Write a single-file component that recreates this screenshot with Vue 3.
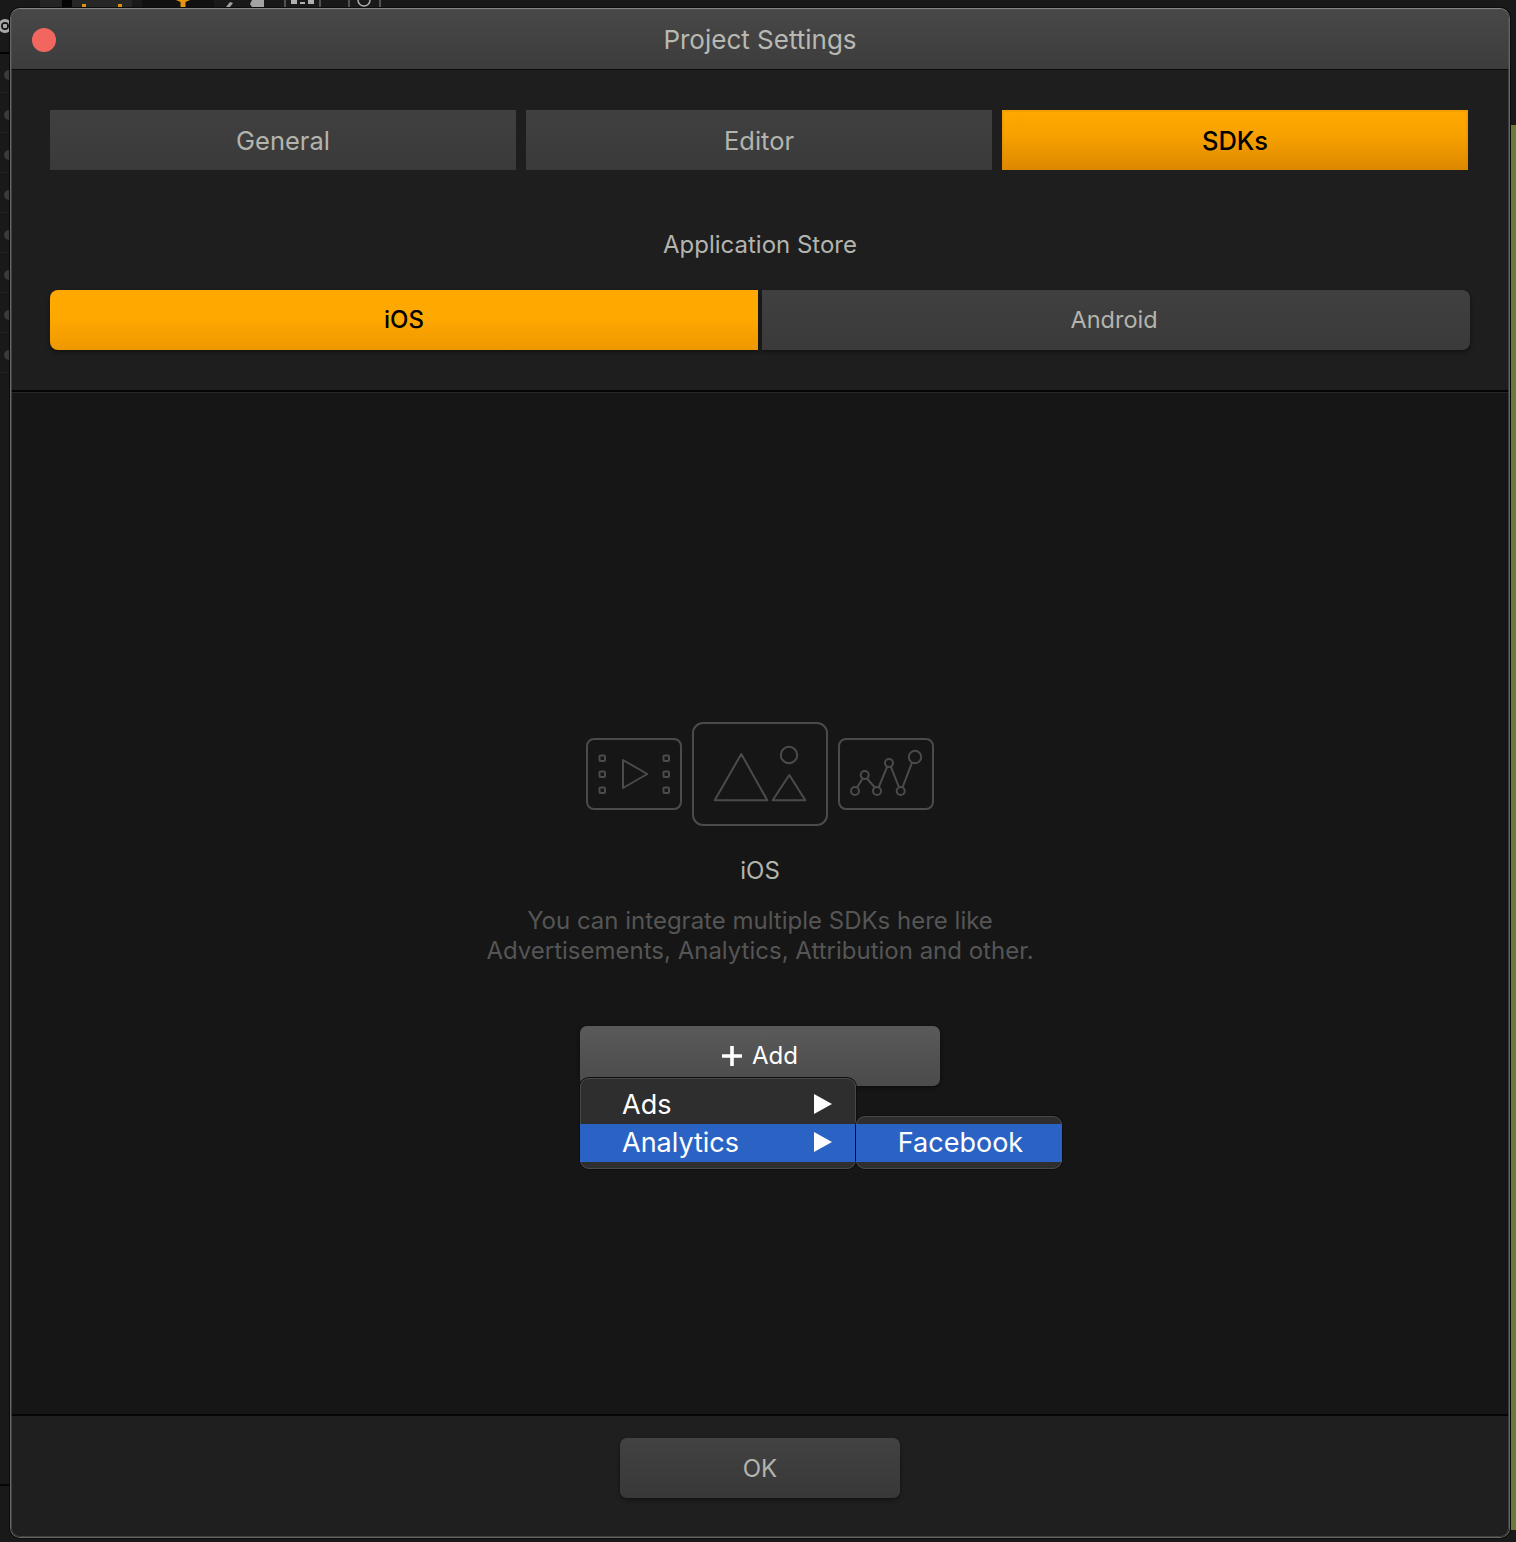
<script setup>
const tabs = [
  { label: 'General', active: false },
  { label: 'Editor', active: false },
  { label: 'SDKs', active: true },
]
const railDots = [75, 115, 155, 195, 235, 275, 315, 355]
const railLines = [92, 132, 172, 212, 252, 292, 332, 372]
</script>

<template>
  <div class="page">
    <div class="backdrop">
      <svg class="toolbar" width="400" height="8" viewBox="0 0 400 8">
        <rect x="40" width="22" height="8" fill="#242424" />
        <rect x="62" width="10" height="8" fill="#050505" />
        <rect x="72" width="60" height="8" fill="#262626" />
        <rect x="82" y="4" width="4" height="3" fill="#e0900c" />
        <rect x="118" y="4" width="4" height="3" fill="#e0900c" />
        <rect x="142" width="72" height="8" fill="#111" />
        <path d="M176 0h14l-4.500 2v5h-5V2Z" fill="#e8950d" />
        <path d="M226 7l4-5 3 1-3 4Z" fill="#a0a0a0" />
        <path d="M252 0h12v7h-12l-2-3Z" fill="#a4a4a4" />
        <path d="M285 0v7M320 0v7" stroke="#8a8a8a" />
        <path d="M291 0h6v4h-6ZM300 2h5v2h-5ZM308 0h6v4h-6Z" fill="#b0b0b0" />
        <path d="M349 0v7M380 0v7" stroke="#8a8a8a" />
        <path d="M358 0a6 6 0 0 0 12 0" fill="none" stroke="#b0b0b0" stroke-width="1.500" />
      </svg>
      <span class="rail-ring"></span>
      <span class="rail-rule"></span>
      <span v-for="y in railDots" :key="'d' + y" class="rail-dot" :style="{ top: y - 5 + 'px' }"></span>
      <span v-for="y in railLines" :key="'l' + y" class="rail-line" :style="{ top: y + 'px' }"></span>
      <span class="rail-rule low"></span>
      <span class="green-strip"></span>
    </div>

    <div class="window">
      <header class="titlebar">
        <span class="close"></span>
        <span class="title">Project Settings</span>
      </header>

      <section class="settings">
        <nav class="tabs">
          <button v-for="t in tabs" :key="t.label" class="tab" :class="{ on: t.active }">{{ t.label }}</button>
        </nav>
        <h2 class="store-label">Application Store</h2>
        <div class="segments">
          <button class="segment left on">iOS</button>
          <button class="segment right">Android</button>
        </div>
      </section>

      <main class="content">
        <svg class="hero" width="348" height="104" viewBox="0 0 348 104" fill="none" stroke="#4b4b4b" stroke-width="2" stroke-linejoin="round">
          <rect x="1" y="17" width="94" height="70" rx="7" />
          <rect x="13.5" y="33.5" width="5.5" height="5.5" rx="1" />
          <rect x="13.5" y="49.5" width="5.5" height="5.5" rx="1" />
          <rect x="13.5" y="65.5" width="5.5" height="5.5" rx="1" />
          <rect x="77.500" y="33.5" width="5.5" height="5.5" rx="1" />
          <rect x="77.500" y="49.5" width="5.5" height="5.5" rx="1" />
          <rect x="77.500" y="65.5" width="5.5" height="5.5" rx="1" />
          <path d="M37 38 61.3 52 37 66Z" />
          <rect x="107" y="1" width="134" height="102" rx="10" />
          <path d="M155.3 32 181.3 78.3H128.7Z" />
          <circle cx="203" cy="33" r="8.2" />
          <path d="M203.3 53 219.3 78.3H186.7Z" />
          <rect x="253" y="17" width="94" height="70" rx="7" />
          <path d="M271 65.5 276.7 56.5M281 56.5 288.8 65.5M292.8 65 301.2 44.7M304.8 44.7 312.9 65M316.7 65 326 40.6" />
          <circle cx="269" cy="69" r="4" />
          <circle cx="278.7" cy="53" r="4" />
          <circle cx="291" cy="69" r="4" />
          <circle cx="303" cy="41" r="4" />
          <circle cx="314.7" cy="69" r="4" />
          <circle cx="329" cy="35" r="6.2" />
        </svg>
        <p class="platform">iOS</p>
        <p class="description">You can integrate multiple SDKs here like<br />Advertisements, Analytics, Attribution and other.</p>
        <div class="add-wrap">
          <button class="add">
            <svg class="plus" width="20" height="20" viewBox="0 0 20 20"><path d="M8.2 0h3.600v8.200H20v3.600h-8.200V20H8.200v-8.200H0V8.200h8.200Z" fill="#fff" /></svg>
            <span>Add</span>
          </button>
          <div class="menu">
            <div class="menu-row">
              <span>Ads</span>
              <svg class="caret" width="18" height="20" viewBox="0 0 18 20"><path d="M0 0 18 10 0 20Z" fill="#fff" /></svg>
            </div>
            <div class="menu-row selected">
              <span>Analytics</span>
              <svg class="caret" width="18" height="20" viewBox="0 0 18 20"><path d="M0 0 18 10 0 20Z" fill="#fff" /></svg>
            </div>
            <div class="submenu">
              <div class="sub-row">Facebook</div>
            </div>
          </div>
        </div>
      </main>

      <footer class="footer">
        <button class="ok">OK</button>
      </footer>
      <span class="edge"></span>
    </div>
  </div>
</template>

<style>
html, body { margin: 0; background: #1a1a1a; }
</style>

<style scoped>
.page {
  position: relative;
  width: 1516px;
  height: 1542px;
  box-sizing: border-box;
  padding: 8px 6px 4px 10px;
  overflow: hidden;
  background: #191919;
  font-family: Inter, "Liberation Sans", sans-serif;
}
.backdrop { position: absolute; inset: 0; }
.toolbar { position: absolute; left: 0; top: 0; display: block; }
.rail-ring {
  position: absolute;
  left: -2px;
  top: 19px;
  width: 8px;
  height: 8px;
  border: 3px solid #a8a8a8;
  border-radius: 50%;
  background: radial-gradient(circle, #a8a8a8 0 2px, transparent 2.5px);
}
.rail-rule { position: absolute; left: 0; top: 52px; width: 10px; height: 2px; background: #020202; }
.rail-rule.low { top: 1484px; background: #050505; }
.rail-dot { position: absolute; left: 4px; width: 10px; height: 10px; border-radius: 50%; background: #3a3a3a; }
.rail-line { position: absolute; left: 0; width: 10px; height: 1px; background: #212121; }
.green-strip { position: absolute; left: 1511px; top: 125px; width: 5px; height: 1405px; background: #6a7a3c; }

.window {
  position: relative;
  width: 1500px;
  height: 1530px;
  box-sizing: border-box;
  display: flex;
  flex-direction: column;
  border: 1px solid #666;
  border-top-color: #858585;
  border-radius: 10px;
  background: #1e1e1e;
  box-shadow: 0 0 0 1px #0c0c0c;
  overflow: hidden;
}
.edge {
  position: absolute;
  inset: 0;
  border-radius: 9px;
  box-shadow: inset 0 0 0 1px rgba(85, 85, 85, .6);
  pointer-events: none;
}
.titlebar {
  position: relative;
  flex: none;
  display: flex;
  align-items: center;
  justify-content: center;
  padding-top: 1px;
  box-sizing: content-box;
  height: 59px;
  background: linear-gradient(#484848, #3c3c3c);
  border-bottom: 1px solid #0b0b0b;
}
.close {
  position: absolute;
  left: 21px;
  top: 19px;
  width: 24px;
  height: 24px;
  border-radius: 50%;
  background: #f1675f;
}
.title { font-size: 26px; color: #b9b9b3; }

.settings {
  flex: none;
  height: 320px;
  box-sizing: border-box;
  padding: 40px 39px 0;
  background: #1e1e1e;
}
.tabs { display: flex; gap: 10px; margin-right: 2px; }
.tab {
  flex: 1;
  height: 60px;
  border: 0;
  padding: 0;
  background: linear-gradient(#404040, #3a3a3a);
  color: #b4b4ae;
  font: 25.500px Inter, "Liberation Sans", sans-serif;
}
.tab.on {
  background: linear-gradient(#ffa800 0%, #f8a200 40%, #dc8800 100%);
  box-shadow: inset 0 0 0 2px rgba(210, 130, 0, .25);
  color: #000;
  font-weight: 500;
}
.store-label {
  margin: 60px 0 0;
  height: 30px;
  line-height: 30px;
  text-align: center;
  font-weight: 400;
  font-size: 24px;
  color: #b4b4ae;
}
.segments { display: grid; grid-template-columns: 1fr 1fr; gap: 4px; margin-top: 30px; }
.segment {
  height: 60px;
  border: 0;
  padding: 0 0 1px;
  font: 24px Inter, "Liberation Sans", sans-serif;
  background: linear-gradient(#404040, #3a3a3a);
  color: #b4b4ae;
  box-shadow: 0 2px 4px rgba(0, 0, 0, .45);
}
.segment.on {
  background: linear-gradient(#ffa800 0%, #ffa800 45%, #ee9800 100%);
  color: #000;
  font-weight: 500;
}
.segment.left { border-radius: 8px 0 0 8px; }
.segment.right { border-radius: 0 8px 8px 0; font-size: 23.500px; padding-right: 4px; }

.content {
  flex: none;
  height: 1026px;
  box-sizing: border-box;
  padding-top: 330px;
  display: flex;
  flex-direction: column;
  align-items: center;
  background: #161616;
  border-top: 2px solid #050505;
  border-bottom: 2px solid #050505;
  box-shadow: inset 0 1px 0 #262626;
}
.hero { display: block; }
.platform {
  margin: 30px 0 0;
  height: 30px;
  line-height: 30px;
  font-size: 24px;
  color: #b4b4ae;
}
.description {
  margin: 20px 0 0;
  line-height: 30px;
  text-align: center;
  font-size: 24px;
  color: #555;
}
.add-wrap { position: relative; width: 360px; margin-top: 60px; }
.add {
  width: 100%;
  height: 60px;
  display: flex;
  align-items: center;
  justify-content: center;
  gap: 10px;
  border: 0;
  border-radius: 7px;
  padding: 0;
  color: #fff;
  font: 24px Inter, "Liberation Sans", sans-serif;
  background: linear-gradient(#5a5a5a, #4b4b4b);
  box-shadow: 0 2px 4px rgba(0, 0, 0, .4);
}
.add span { margin-bottom: 2px; }
.menu {
  position: absolute;
  left: 0;
  top: 52px;
  width: 276px;
  height: 91px;
  box-sizing: border-box;
  padding-top: 8px;
  background: #2e2e2e;
  border-radius: 9px;
  box-shadow: 0 0 0 1px #0e0e0e, inset 0 0 0 1px #4a4a4a;
}
.menu-row {
  height: 38px;
  box-sizing: border-box;
  padding: 0 24px 2px 42px;
  display: flex;
  align-items: center;
  justify-content: space-between;
  color: #fff;
  font-size: 27px;
}
.menu-row.selected { background: #2a63c4; }
.submenu {
  position: absolute;
  left: 276px;
  top: 38px;
  width: 206px;
  height: 53px;
  box-sizing: border-box;
  padding-top: 8px;
  background: #2e2e2e;
  border-radius: 9px;
  box-shadow: 0 0 0 1px #0e0e0e, inset 0 0 0 1px #4a4a4a;
}
.sub-row {
  height: 38px;
  box-sizing: border-box;
  padding-left: 3px;
  line-height: 38px;
  text-align: center;
  background: #2a63c4;
  color: #fff;
  font-size: 27px;
}

.footer {
  flex: 1;
  display: flex;
  justify-content: center;
  padding-top: 22px;
  background: #1f1f1f;
}
.ok {
  width: 280px;
  height: 60px;
  border: 0;
  border-radius: 7px;
  padding: 0;
  color: #b4b4ae;
  font: 24px Inter, "Liberation Sans", sans-serif;
  background: linear-gradient(#424242, #383838);
  box-shadow: 0 2px 4px rgba(0, 0, 0, .4);
}
</style>
